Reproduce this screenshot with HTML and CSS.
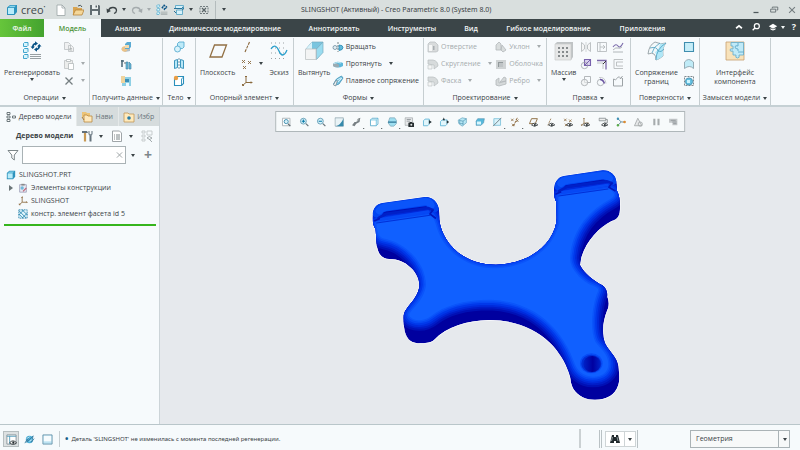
FILE: index.html
```html
<!DOCTYPE html>
<html lang="ru">
<head>
<meta charset="utf-8">
<title>SLINGSHOT - Creo Parametric 8.0</title>
<link rel="stylesheet" href="styles.css">
</head>
<body>
<svg class="sprite" aria-hidden="true">
  <symbol id="cube" viewBox="0 0 12 12"><path d="M1 3.500 4 1h7v7L8.500 11H1z" fill="#2e93bd"/><path d="M2 4h6v6H2z" fill="#b9ecfa"/><path d="M2.500 3.300 4.300 1.700h5.500L8.300 3.300z" fill="#8bd6ee"/></symbol>
  <symbol id="new" viewBox="0 0 12 12"><path d="M2 1h5l3 3v7.500H2z" fill="#fff" stroke="#9ba3a5" stroke-width=".8"/><path d="M7 1v3h3" fill="none" stroke="#9ba3a5" stroke-width=".8"/></symbol>
  <symbol id="open" viewBox="0 0 12 12"><path d="M1 3h4l1 1h4v7H1z" fill="#d9a552"/><path d="M1 11 3.500 6H12l-2 5z" fill="#f4d79a" stroke="#b07a2c" stroke-width=".7"/><path d="M6 2q3-2 4 1" fill="none" stroke="#4b585c"/></symbol>
  <symbol id="save" viewBox="0 0 12 12"><path d="M1 1h9l1 1v9H1z" fill="#626d71"/><path d="M3 1h6v4H3zM3 7h6v4H3z" fill="#e9eeee"/><path d="M6.500 1.500H8v2H6.500z" fill="#566165"/></symbol>
  <symbol id="undo" viewBox="0 0 12 12"><path d="M2.500 6.500C4 2 10.500 3 10.500 6.500q0 2-2.500 3" fill="none" stroke="currentColor" stroke-width="1.300"/><path d="M.5 4.500 1 9l4-2z" fill="currentColor"/></symbol>
  <symbol id="regen" viewBox="0 0 20 20"><g fill="#d8f4fc" stroke="#2f9cc8" stroke-width=".9"><path d="M1.500 2.500 2.500 1.500h3.500v3l-1 1h-3.500zM1.500 8.500l1-1h3.500v3l-1 1h-3.500zM1.500 14.500l1-1h3.500v3l-1 1h-3.500z"/></g><path d="M8 13.500h11M8 15.500h11M8 17.500h11" stroke="#8b9497" stroke-width=".9"/><path d="M10.700 6.500q0-3.500 3-4M17.300 4.500q0 3.500-3 4" stroke="#0b5486" stroke-width="1.700" fill="none"/><path d="M13 .2v4.600l3-2.300zM15 6.200v4.600l-3-2.300zM8.500 5.500h4.400L10.700 8zM15.100 5.500h4.400L17.300 3z" fill="#0b5486"/></symbol>
  <symbol id="windows" viewBox="0 0 12 12"><path d="M2.500 1.500h8v3h-8zM3.500 6h6v4.500h-6z" fill="#d5f1fa" stroke="#5ba7c6" stroke-width=".9"/><path d="M1 4.500h8M9 3l2 1.500L9 6M3 9 1 7" fill="none" stroke="#28749a"/></symbol>
  <symbol id="closewin" viewBox="0 0 12 12"><path d="M2 2.500h8v7H2z" fill="none" stroke="#737d80" stroke-dasharray="2 1"/><path d="m4 4 4 4m0-4L4 8" stroke="#596467" stroke-width="1.200"/></symbol>
  <symbol id="copy" viewBox="0 0 12 12"><path d="M1.500 1.500h4l2 2v5h-6zM5.500 4.500h3l2 2v4h-5z" fill="#eff0f1" stroke="#bbc0c2" stroke-width=".8"/><path d="M6.500 7.500H9M6.500 9H9" stroke="#abb1b3" stroke-width=".8"/></symbol>
  <symbol id="paste" viewBox="0 0 12 12"><path d="M1.500 2.500h8v8h-8z" fill="#ecedec" stroke="#bec2c3" stroke-width=".8"/><path d="M3.500 1.500h4v2h-4zM5.500 5.500h5v6h-5z" fill="#fff" stroke="#b4babb" stroke-width=".8"/></symbol>
  <symbol id="cross" viewBox="0 0 12 12"><path d="m2.500 2.500 7 7m0-7-7 7" stroke="#757e81" stroke-width="1.300"/></symbol>
  <symbol id="shapes" viewBox="0 0 12 12"><path d="M1 8 6 5l4 2v3l-5 1z" fill="#b4bec4"/><circle cx="4.500" cy="8" r="2.800" fill="#ecc389"/><path d="M5 3 7 1h4v5L9 8H5z" fill="#5aaad3"/><path d="M5 4h4v3H5z" fill="#f4dcae"/></symbol>
  <symbol id="copygeom" viewBox="0 0 12 12"><path d="M2 2v7M1 3h3" stroke="#4c6675" stroke-width="1.500"/><path d="M4 5h3" stroke="#888" stroke-width="1.200"/><path d="M6 4h2v7H6zM9 4l2 2v5H9z" fill="#67bbdc" stroke="#3d7d9d" stroke-width=".6"/></symbol>
  <symbol id="shrink" viewBox="0 0 12 12"><path d="M2 2h9v9H2z" fill="#8fd0e5"/><path d="M1 1h4v7H1z" fill="#efd49e"/><path d="M5 4h4v3H5z" fill="#3c8fb5"/><path d="M6 8h3v3H6z" fill="#eefaff"/></symbol>
  <symbol id="bodies" viewBox="0 0 12 12"><path d="M4.500 2.500 6 1h5v5L9.500 7.500h-5z" fill="#bdeaf8" stroke="#4aa5cb" stroke-width=".8"/><circle cx="4.500" cy="8" r="3" fill="#d8f3fb" stroke="#4aa5cb" stroke-width=".8"/></symbol>
  <symbol id="split" viewBox="0 0 12 12"><path d="m1.500 2.500 3-1v8l-3 1zM7.500 1.500l3 1v8l-3-1z" fill="#b9e7f7" stroke="#2b8bb6" stroke-width=".9"/><path d="M6 0v12" stroke="#467f99" stroke-width=".8" stroke-dasharray="2 1"/></symbol>
  <symbol id="newbody" viewBox="0 0 12 12"><path d="M1.500 3.500 3.500 1.500h7V8.500l-2 2h-7z" fill="#fff" stroke="#2a8fbb" stroke-width="1.100"/><path d="M8.500 4v6.500M8.500 4l2-2" stroke="#2a8fbb" stroke-width=".9"/><circle cx="3" cy="3" r="2.200" fill="#eb9f45"/></symbol>
  <symbol id="plane" viewBox="0 0 20 20"><path d="M6.500 4h12l-4.500 12H2z" fill="none" stroke="#927044" stroke-width="1.300"/></symbol>
  <symbol id="axis" viewBox="0 0 12 12"><path d="m4 11 4.500-10" stroke="#896537" stroke-width="1.100" stroke-dasharray="3 1"/></symbol>
  <symbol id="points" viewBox="0 0 12 12"><path d="m1 2 3 3m0-3L1 5m6-2 3 3m0-3L7 6M2 8l3 3m0-3-3 3" stroke="#8a693c" stroke-width=".9"/></symbol>
  <symbol id="csys" viewBox="0 0 12 12"><path d="M5 1v6.500h6M5 7.500 1.500 10.500M4 2l1-1 1 1m4 4.500 1 1-1 1M1.500 9v1.500H3" fill="none" stroke="#8a693c"/></symbol>
  <symbol id="sketch" viewBox="0 0 20 20"><path d="M2 2h16M2 7h16M2 12h16M2 17.500h16" stroke="#9ba2a4" stroke-width="1" stroke-dasharray="1 3"/><path d="M2 8c3-5 6-3 8 2s5 6 8-1" fill="none" stroke="#289ecb" stroke-width="1.300"/></symbol>
  <symbol id="extrude" viewBox="0 0 20 20"><path d="m2 8 6-7h11L12.500 8z" fill="#79c5df" stroke="#77a9bd" stroke-width=".7"/><path d="m8 1v7H2z" fill="#d8f2fa"/><path d="m12.500 8 6.500-7v10.500l-6.500 7z" fill="#9adcf0" stroke="#77a9bd" stroke-width=".7"/><path d="M1.500 8h10.500v10.500H1.500z" fill="#f3f4f4" stroke="#bfc4c5" stroke-width=".8"/></symbol>
  <symbol id="revolve" viewBox="0 0 12 12"><path d="M6 1v10" stroke="#5c676b" stroke-width=".8" stroke-dasharray="2 1"/><circle cx="3" cy="6.500" r="2" fill="#e3edf1" stroke="#6d8d9f" stroke-width=".8"/><path d="M7 4q4 0 4 2.500t-4 3z" fill="#60bbdc" stroke="#2888b1" stroke-width=".8"/></symbol>
  <symbol id="sweep" viewBox="0 0 12 12"><path d="M1 6q3-4 10-1v3q-5 3-10 0z" fill="#5eb8db"/><path d="M1 6q4-2 6 1v2q-4 1-6-1z" fill="#9aabb3"/><path d="M2 5.500q4-2 7-.5" fill="none" stroke="#d8f4fb" stroke-width=".8"/></symbol>
  <symbol id="blend" viewBox="0 0 12 12"><path d="m1.500 9 3-5 5-3 1.500 2-4 6-4 1.500z" fill="#7bc7e5" stroke="#3c8fb4" stroke-width=".8"/><path d="m1.500 10 2-4 2-.5L3.500 11z" fill="#f7fafb" stroke="#71838c" stroke-width=".7"/><path d="m5 5 4-2M6 7l4-4" stroke="#e5f8fd" stroke-width=".8"/></symbol>
  <symbol id="solid" viewBox="0 0 12 12"><path d="M1 3 3 1h5l3 3v6l-2 1H1z" fill="#d8dbdc" stroke="#b7bcbe" stroke-width=".7"/><path d="M2 4h3v6H2z" fill="#f6f7f7"/><path d="M6 5h1.500v4H6z" fill="#a8aeb1"/></symbol>
  <symbol id="round" viewBox="0 0 12 12"><path d="M1 2h5q5 1 5 6l-4 3V7L1 6z" fill="#d7dbdc" stroke="#b7bdbf" stroke-width=".7"/><path d="M1 7h4v4H1z" fill="#f5f6f6" stroke="#b9bfc0" stroke-width=".6"/></symbol>
  <symbol id="shell" viewBox="0 0 12 12"><path d="M1 2h10v9H1z" fill="#cfd3d4"/><path d="M3 4h5v5H3z" fill="#92999b"/><path d="M4 5h4v4H4z" fill="#bfc4c6"/></symbol>
  <symbol id="draft" viewBox="0 0 12 12"><path d="M1 9V4l3-3 2 2v6zM6 9l1-5 4 5-3 2z" fill="#d9dddd" stroke="#b2b8ba" stroke-width=".8"/></symbol>
  <symbol id="rib" viewBox="0 0 12 12"><path d="M1 10V5l3-2v5L11 6v3l-7 2zM5 7l4-5 2 1v3z" fill="#d5d9da" stroke="#b2b8ba" stroke-width=".8"/></symbol>
  <symbol id="pattern" viewBox="0 0 20 20"><path d="m1 3 2-2h16v15l-2 3H1z" fill="#bfc3c5"/><path d="M1 3h16v16H1z" fill="#e6e7e7" stroke="#c8cbcc" stroke-width=".7"/><path d="M4 6h2v2H4zm4 0h2v2H8zm4 0h2v2h-2zM4 10h2v2H4zm4 0h2v2H8zm4 0h2v2h-2zM4 14h2v2H4zm4 0h2v2H8zm4 0h2v2h-2z" fill="#858a8c"/></symbol>
  <symbol id="mirror" viewBox="0 0 12 12"><path d="m1.500 1.500 3 2.500v4l-3 2.500zM10.500 1.500l-3 2.500v4l3 2.500z" fill="#f5f6f6" stroke="#b0b5b7" stroke-width=".8"/><path d="M6 1v10" stroke="#c9cdce" stroke-width=".8"/></symbol>
  <symbol id="extend" viewBox="0 0 12 12"><path d="M1.500 1.500h9v9h-9zM4 1.500v9M4 6h5M7 4l2 2-2 2" fill="none" stroke="#b0b5b8" stroke-width=".8"/></symbol>
  <symbol id="offset" viewBox="0 0 12 12"><path d="M1 6q3-4 5-1t5-3" fill="none" stroke="#7b6bab" stroke-width="1.100"/><path d="M1 9q3-3 5-2t4-1M1 11h10" fill="none" stroke="#a0a5a8" stroke-width=".8"/></symbol>
  <symbol id="merge" viewBox="0 0 12 12"><path d="M4.500 1.500h6v6h-6z" fill="#d9d1ed" stroke="#7862ad" stroke-width="1.100"/><circle cx="4.500" cy="7.500" r="3.200" fill="none" stroke="#a0a5a8" stroke-width=".8"/><path d="m5 7 5-5" stroke="#7862ad"/></symbol>
  <symbol id="trim" viewBox="0 0 12 12"><path d="M1 2.500h9v9" fill="none" stroke="#7c68a9" stroke-width="1.300"/><path d="M1 5h6v6" fill="none" stroke="#b3b7b9" stroke-width=".8"/><path d="m7 6 3-3" stroke="#333"/></symbol>
  <symbol id="thicken" viewBox="0 0 12 12"><path d="M11 1.500H2v9h9M11 4H4.500v4H11" fill="none" stroke="#b7bbbd" stroke-width=".9"/></symbol>
  <symbol id="intersect" viewBox="0 0 12 12"><path d="M4.500 1.500h6v6h-6z" fill="none" stroke="#abb0b3" stroke-width=".9"/><circle cx="4.500" cy="7.500" r="3.200" fill="#f0f1f1" fill-opacity=".6" stroke="#abb0b3" stroke-width=".9"/></symbol>
  <symbol id="project" viewBox="0 0 12 12"><circle cx="4.500" cy="7.500" r="3.200" fill="none" stroke="#abb0b3" stroke-width=".9"/><path d="M3 2.500q6-1 7 6" fill="none" stroke="#c6c9cb"/><path d="M4 4.500q3 0 4.500 4" fill="none" stroke="#6952a2" stroke-width="1.400"/></symbol>
  <symbol id="solidify" viewBox="0 0 12 12"><path d="M1.500 4v7h9V3M1.500 4q2 2 4-1t3 1l2-3" fill="none" stroke="#9da3a6"/></symbol>
  <symbol id="surface" viewBox="0 0 20 20"><path d="M1 13Q2 4 8 1q6 3 11 1-4 4-3 13-5 4-7 4 0-9-8-6z" fill="#f2f8fa" stroke="#8a959a" stroke-width=".8"/><path d="M13 2.500q4 .5 6-.5-4 4-3 13-5 4-7 4 1-5-1-8 4-1 5-8.500z" fill="#b0e7f7"/><path d="M3 7q7-2 8 3 3 2 6-2M5 12Q6 6 13 2M9 19Q9 8 19 2" fill="none" stroke="#4a9ebf" stroke-width=".8"/></symbol>
  <symbol id="fill" viewBox="0 0 12 12"><path d="M1.500 1.500h9v9h-9z" fill="#c5edf8" stroke="#3f8dae" stroke-width="1.100"/></symbol>
  <symbol id="style" viewBox="0 0 12 12"><path d="M1.500 10.500V4q4-5 9 0v6.500q-4-4-9 0z" fill="#c0ebf7" stroke="#849ba4" stroke-width=".8"/></symbol>
  <symbol id="freestyle" viewBox="0 0 12 12"><path d="M1.500 1.500h9v9h-9z" fill="none" stroke="#6f7c81" stroke-width=".9" stroke-dasharray="2 1"/><circle cx="6" cy="6.500" r="3.600" fill="#65c0e0" stroke="#3d8aab" stroke-width=".8"/><path d="M4 5h3v3H4z" fill="#ccf4fe"/></symbol>
  <symbol id="puzzle" viewBox="0 0 20 20"><path d="M1 1h18v18H1z" fill="#f8e2ba" stroke="#c6a06e" stroke-width=".8"/><path d="M6 1.500h12.500V14H14q1 3-1.500 3T11 14H8v-4q-3 1-3-1t3-1V5H6z" fill="#c0eaf8" stroke="#5fa9ca" stroke-width=".8"/><path d="M13 2v3q-3-1-3 1t3 2v2m0 1h6" fill="none" stroke="#5fa9ca" stroke-width=".9"/></symbol>
  <symbol id="tree" viewBox="0 0 12 12"><path d="M2 1.500h3v2H2zM2 5h3v2H2zM2 8.500h3v2H2zM7.500 5h3v2h-3z" fill="#fff" stroke="#5f6b6f" stroke-width=".9"/></symbol>
  <symbol id="folders" viewBox="0 0 12 12"><path d="M1 1h4l1 1h3v4H1z" fill="#ecc478"/><path d="M3 4h3l1 1h4v6H3z" fill="#ffe9bd" stroke="#b98940" stroke-width=".8"/><path d="m1 6 2 3" stroke="#b17b2e"/></symbol>
  <symbol id="favorite" viewBox="0 0 12 12"><path d="M1 2h4l1 1h5v8H1z" fill="#ffeabc" stroke="#c09758" stroke-width=".8"/><circle cx="6" cy="7" r="1.800" fill="#277ca6"/></symbol>
  <symbol id="tools" viewBox="0 0 12 12"><path d="M4 3v8.500" stroke="#c99a55" stroke-width="2.200"/><path d="M1 3V1h5l1 2z" fill="#62707a"/><path d="M9.500 5v6.500" stroke="#65737c" stroke-width="2"/><path d="M8 1v3l1.500 1.500L11 4V1" fill="none" stroke="#7a8790" stroke-width="1.200"/></symbol>
  <symbol id="sheet" viewBox="0 0 12 12"><path d="M1.500 1h7l2 2v8.500h-9z" fill="#fff" stroke="#949b9e" stroke-width=".9"/><path d="M3 5h1m1 0h4M3 7h1m1 0h4M3 9h1m1 0h4" stroke="#6e787c" stroke-width=".9"/></symbol>
  <symbol id="treefind" viewBox="0 0 12 12"><path d="M1 1h3v2H1zm0 4h3v2H1zm0 4h3v2H1zM6 1h5v4H6z" fill="none" stroke="#c3c8ca" stroke-width=".9"/><path d="M6 8q2-3 5 0-2 3-5 0zM8 9l3 3" fill="none" stroke="#9aa1a4" stroke-width=".9"/></symbol>
  <symbol id="funnel" viewBox="0 0 12 12"><path d="M1 1.500h10L7.300 6v5L4.800 9V6z" fill="#fff" stroke="#6d787c" stroke-width=".9"/></symbol>
  <symbol id="design" viewBox="0 0 12 12"><path d="M2 2h8v9H2z" fill="#e8eaf3" stroke="#9c9fb8"/><path d="M4 1h4v2H4z" fill="#888"/><circle cx="5" cy="6" r="2" fill="#72b8da"/><path d="m6 10 4-4" stroke="#bd6275" stroke-width="1.300"/></symbol>
  <symbol id="facet" viewBox="0 0 12 12"><path d="M1 1h10v10H1z" fill="#dff4fb" stroke="#2781a8" stroke-dasharray="2 1"/><path d="m1 2 9 9M5 1l6 6M1 6l5 5M7 1 1 7m10-2-6 6" stroke="#2786b0"/></symbol>
  <symbol id="zoomfit" viewBox="0 0 12 12"><path d="M1.500 1.500h9v9h-9z" fill="#fff" stroke="#a3abae"/><circle cx="6" cy="5.500" r="2.500" fill="#d4eff8" stroke="#2e82a6"/><path d="m8 8 3 3" stroke="#57656b" stroke-width="1.400"/></symbol>
  <symbol id="zoomin" viewBox="0 0 12 12"><circle cx="5" cy="5" r="3.500" fill="#d8f2fa" stroke="#5c98b0"/><path d="M3 5h4M5 3v4" stroke="#087aa9" stroke-width="1.300"/><path d="m8 8 3 3" stroke="#66747a" stroke-width="1.500"/></symbol>
  <symbol id="zoomout" viewBox="0 0 12 12"><circle cx="5" cy="5" r="3.500" fill="#d8f2fa" stroke="#5c98b0"/><path d="M3 5h4" stroke="#087aa9" stroke-width="1.300"/><path d="m8 8 3 3" stroke="#66747a" stroke-width="1.500"/></symbol>
  <symbol id="repaint" viewBox="0 0 12 12"><path d="M1 1h10v10H1z" fill="#e9f3f6" stroke="#839ba5" stroke-width=".8"/><path d="M2 11q6-2 9-9v9z" fill="#358aac"/></symbol>
  <symbol id="brush" viewBox="0 0 12 12"><path d="m1 10 3-4h2l2-4 3-1-1 5-4 2-2 3z" fill="#777f83"/><path d="m6 6 3-3" stroke="#d3d8d9"/></symbol>
  <symbol id="box" viewBox="0 0 12 12"><path d="m1.500 3.500 2-2h7v7l-2 2h-7z" fill="#fff" stroke="#56a7c9"/><path d="M1.500 3.500h7v7m0-7 2-2" fill="none" stroke="#61bfdf"/></symbol>
  <symbol id="section" viewBox="0 0 12 12"><path d="M3 1h6l2 3v4l-3 3H4L1 7z" fill="#9edff1" stroke="#7ba3b4" stroke-width=".8"/><path d="M1 6h10" stroke="#2c7595" stroke-width="1.500"/></symbol>
  <symbol id="camera" viewBox="0 0 12 12"><path d="M1 1h9v9H1z" fill="#e6e8e9" stroke="#9ba2a5" stroke-width=".8"/><path d="M3 3h5M3 5h4" stroke="#8b9396"/><path d="M5 7h1l1-1h2l1 1h2v5H5z" fill="#272e30"/><circle cx="8.500" cy="9.300" r="1.200" fill="#dfe3e4"/></symbol>
  <symbol id="boxright" viewBox="0 0 12 12"><path d="m1.500 4.500 2-2h5v6l-2 2h-5z" fill="#e1f6fc" stroke="#5cb3d5"/><path d="M8 3.500v5L11.500 6z" fill="#263337"/></symbol>
  <symbol id="boxtop" viewBox="0 0 12 12"><path d="m1.500 5.500 2-2h6v5l-2 2h-6z" fill="#e1f6fc" stroke="#5cb3d5"/><path d="M4 4 5.500.5 7 4zM9 4v4l3-2z" fill="#263337"/></symbol>
  <symbol id="persp" viewBox="0 0 12 12"><path d="m1 4 5-3 5 1v5l-5 4-4-3z" fill="#b8e8f5" stroke="#62a2bb" stroke-width=".8"/><path d="m2 4 5 1 4-3M7 5v5M3 5v3h4" fill="none" stroke="#4890ad" stroke-width=".8"/></symbol>
  <symbol id="flat" viewBox="0 0 12 12"><path d="m1 5 2-3h8l-1 5-3 3H1z" fill="#55b8db" stroke="#4b8eac" stroke-width=".7"/><path d="M2 5.500h5V9H2z" fill="#d9f6fd"/></symbol>
  <symbol id="clip" viewBox="0 0 12 12"><path d="M2 2h8v8H2z" fill="#d9f3fb" stroke="#7cc2da"/><path d="M1 11 11 1" stroke="#78868c" stroke-width="1.200"/></symbol>
  <symbol id="eye" viewBox="0 0 12 12"><path d="M4 9.500q3.500-4 7.500 0-4 3.500-7.500 0z" fill="#fff" stroke="#303638"/><circle cx="8" cy="9.500" r="1.200" fill="#20282b"/></symbol>
  <symbol id="planeview" viewBox="0 0 12 12"><path d="M4 2h7L8.500 8H1.500z" fill="none" stroke="#8a693c" stroke-width="1.100"/></symbol>
  <symbol id="note" viewBox="0 0 12 12"><path d="M1 1.500h8v3H1zM9 3h2v4H7" fill="#eee" stroke="#888f92"/></symbol>
  <symbol id="spin" viewBox="0 0 12 12"><path d="m2 2 4 4-4 4m4-4h5" fill="none" stroke="#507e92"/><circle cx="2" cy="2" r="1.500" fill="#3f91b6"/><circle cx="2" cy="10" r="1.500" fill="#5aab4b"/><circle cx="10" cy="6" r="1.600" fill="#df8b2f"/></symbol>
  <symbol id="warning" viewBox="0 0 12 12"><path d="m5.500 1.500 5 9h-9z" fill="#e6e8e9" stroke="#a3a8aa"/><circle cx="8.500" cy="8.500" r="2.500" fill="none" stroke="#a3a8aa"/></symbol>
  <symbol id="pause" viewBox="0 0 12 12"><path d="M2.500 2H5v8H2.500zM7.500 2H10v8H7.500z" fill="#a6abad"/></symbol>
  <symbol id="resume" viewBox="0 0 12 12"><path d="M1 2h10v8H5V7H1z" fill="#c4c8ca"/><path d="M3 4h6M5 6h5M6 8h4" stroke="#8e9497"/></symbol>
  <symbol id="panel" viewBox="0 0 12 12"><path d="M1 1h10v10H1z" fill="#fff" stroke="#88949a"/><path d="M1 2.500h10M4 2v9" stroke="#569fbd"/><use href="#eye" width="12" height="12"/></symbol>
  <symbol id="browser" viewBox="0 0 12 12"><circle cx="6" cy="6" r="4" fill="#4fb0d8"/><path d="M1 10 5 3l-2 6 7-7-2 7 3-4" fill="none" stroke="#3a7fa3"/><path d="m3 5 3-2m0 5 3-2" stroke="#caf1fd"/></symbol>
  <symbol id="fullscreen" viewBox="0 0 12 12"><path d="M1 1h10v10H1z" fill="#bde3f2" stroke="#6b96ac"/><path d="M2 2h8v6H2z" fill="#f7fcfe"/></symbol>
  <symbol id="binoculars" viewBox="0 0 12 12"><path d="M3 2h2v2h2V2h2l2 8H7V8H5v2H1z" fill="#20292c"/><path d="m3.500 4-1 4m5.500-4 1 4" stroke="#a2adb1" stroke-width=".8"/></symbol>
  <symbol id="hat" viewBox="0 0 12 12"><path d="m1 5 5-3 5 3-5 3z" fill="#fff"/><path d="M3 8q3 3 6 0" fill="none" stroke="#fff" stroke-width="1.500"/></symbol>
  <symbol id="loupe" viewBox="0 0 12 12"><circle cx="7" cy="5" r="3" fill="none" stroke="#fff" stroke-width="1.500"/><path d="m5 7-3 3" stroke="#fff" stroke-width="1.600"/></symbol>
  <symbol id="up" viewBox="0 0 12 12"><path d="m2.500 7.500 3.500-3 3.500 3" fill="none" stroke="#fff" stroke-width="2"/></symbol>
  <symbol id="min" viewBox="0 0 12 12"><path d="M3 9h6" stroke="#4e585b" stroke-width="1.500"/></symbol>
  <symbol id="restore" viewBox="0 0 12 12"><path d="M4 4V2.500h6.500V6H9M2 5h6v3.500H2z" fill="none" stroke="#5e686b"/></symbol>
</svg>

<div class="app">
  <header class="titlebar">
    <div class="brand"><svg class="i"><use href="#cube"/></svg><span>creo<sup>•</sup></span></div>
    <div class="quick">
      <button aria-label="Создать"><svg class="i"><use href="#new"/></svg></button>
      <button aria-label="Открыть"><svg class="i"><use href="#open"/></svg></button>
      <button aria-label="Сохранить"><svg class="i"><use href="#save"/></svg></button>
      <button aria-label="Отменить"><svg class="i"><use href="#undo"/></svg><i class="caret"></i></button>
      <button class="redo" aria-label="Повторить"><svg class="i flip"><use href="#undo"/></svg><i class="caret"></i></button>
      <button aria-label="Регенерация"><svg class="i"><use href="#regen"/></svg></button>
      <button aria-label="Окна"><svg class="i"><use href="#windows"/></svg><i class="caret"></i></button>
      <button aria-label="Закрыть окно"><svg class="i"><use href="#closewin"/></svg></button>
      <button class="more" aria-label="Настроить панель"><i class="caret"></i></button>
    </div>
    <h1>SLINGSHOT (Активный) - Creo Parametric 8.0 (System 8.0)</h1>
    <div class="winctl">
      <button aria-label="Свернуть"><svg class="s"><use href="#min"/></svg></button>
      <button aria-label="Развернуть"><svg class="s"><use href="#restore"/></svg></button>
      <button aria-label="Закрыть"><svg class="s"><use href="#cross"/></svg></button>
    </div>
  </header>

  <nav class="menubar">
    <a class="file" href="#">Файл</a>
    <a class="current" href="#">Модель</a>
    <a class="t1" href="#">Анализ</a>
    <a class="t2" href="#">Динамическое моделирование</a>
    <a class="t3" href="#">Аннотировать</a>
    <a class="t4" href="#">Инструменты</a>
    <a class="t5" href="#">Вид</a>
    <a class="t6" href="#">Гибкое моделирование</a>
    <a class="t7" href="#">Приложения</a>
    <div class="help">
      <button aria-label="Скрыть ленту"><svg class="s"><use href="#up"/></svg></button>
      <button aria-label="Поиск"><svg class="s"><use href="#loupe"/></svg></button>
      <button aria-label="Обучение"><svg class="s"><use href="#hat"/></svg><i class="caret"></i></button>
      <button aria-label="Справка">?</button>
    </div>
  </nav>

  <section class="ribbon">
    <div class="group g1">
      <div class="tools">
        <button class="big"><svg><use href="#regen"/></svg><span>Регенерировать</span><i class="caret"></i></button>
        <div class="stack">
          <button aria-label="Копировать"><svg class="i"><use href="#copy"/></svg></button>
          <button class="off" aria-label="Вставить"><svg class="i"><use href="#paste"/></svg><i class="caret"></i></button>
          <button class="off" aria-label="Удалить"><svg class="i"><use href="#cross"/></svg><i class="caret"></i></button>
        </div>
      </div>
      <button class="label">Операции<i class="caret"></i></button>
    </div>
    <div class="group g2">
      <div class="tools mid">
        <div class="stack">
          <button aria-label="Пользовательский элемент"><svg class="i"><use href="#shapes"/></svg></button>
          <button aria-label="Копировать геометрию"><svg class="i"><use href="#copygeom"/></svg></button>
          <button aria-label="Упрощение"><svg class="i"><use href="#shrink"/></svg></button>
        </div>
      </div>
      <button class="label">Получить данные<i class="caret"></i></button>
    </div>
    <div class="group g3">
      <div class="tools mid">
        <div class="stack">
          <button aria-label="Булевы операции"><svg class="i"><use href="#bodies"/></svg></button>
          <button aria-label="Разделить тело"><svg class="i"><use href="#split"/></svg></button>
          <button aria-label="Новое тело"><svg class="i"><use href="#newbody"/></svg></button>
        </div>
      </div>
      <button class="label">Тело<i class="caret"></i></button>
    </div>
    <div class="group g4">
      <div class="tools">
        <button class="big"><svg><use href="#plane"/></svg><span>Плоскость</span></button>
        <div class="stack">
          <button aria-label="Ось"><svg class="i"><use href="#axis"/></svg></button>
          <button aria-label="Точка"><svg class="i"><use href="#points"/></svg><i class="caret"></i></button>
          <button aria-label="Система координат"><svg class="i"><use href="#csys"/></svg></button>
        </div>
        <button class="big"><svg><use href="#sketch"/></svg><span>Эскиз</span></button>
      </div>
      <button class="label">Опорный элемент<i class="caret"></i></button>
    </div>
    <div class="group g5">
      <div class="tools">
        <button class="big"><svg><use href="#extrude"/></svg><span>Вытянуть</span></button>
        <div class="stack">
          <button><svg class="i"><use href="#revolve"/></svg>Вращать</button>
          <button><svg class="i"><use href="#sweep"/></svg>Протянуть<i class="caret far"></i></button>
          <button><svg class="i"><use href="#blend"/></svg>Плавное сопряжение</button>
        </div>
      </div>
      <button class="label">Формы<i class="caret"></i></button>
    </div>
    <div class="group g6">
      <div class="tools">
        <div class="stack off">
          <button><svg class="i"><use href="#solid"/></svg>Отверстие</button>
          <button><svg class="i"><use href="#round"/></svg>Скругление<i class="caret far"></i></button>
          <button><svg class="i"><use href="#round"/></svg>Фаска<i class="caret far"></i></button>
        </div>
        <div class="stack off">
          <button><svg class="i"><use href="#draft"/></svg>Уклон<i class="caret far"></i></button>
          <button><svg class="i"><use href="#shell"/></svg>Оболочка</button>
          <button><svg class="i"><use href="#rib"/></svg>Ребро<i class="caret far"></i></button>
        </div>
      </div>
      <button class="label">Проектирование<i class="caret"></i></button>
    </div>
    <div class="group g7">
      <div class="tools">
        <button class="big"><svg><use href="#pattern"/></svg><span>Массив</span><i class="caret"></i></button>
        <div class="matrix">
          <button aria-label="Зеркало"><svg class="i"><use href="#mirror"/></svg></button>
          <button aria-label="Удлинить"><svg class="i"><use href="#extend"/></svg></button>
          <button aria-label="Сместить"><svg class="i"><use href="#offset"/></svg></button>
          <button aria-label="Объединить"><svg class="i"><use href="#merge"/></svg></button>
          <button aria-label="Обрезать"><svg class="i"><use href="#trim"/></svg></button>
          <button aria-label="Утолстить"><svg class="i"><use href="#thicken"/></svg></button>
          <button aria-label="Пересечь"><svg class="i"><use href="#intersect"/></svg></button>
          <button aria-label="Проецировать"><svg class="i"><use href="#project"/></svg></button>
          <button aria-label="Создать тело"><svg class="i"><use href="#solidify"/></svg></button>
        </div>
      </div>
      <button class="label">Правка<i class="caret"></i></button>
    </div>
    <div class="group g8">
      <div class="tools">
        <button class="big"><svg><use href="#surface"/></svg><span>Сопряжение<br>границ</span></button>
        <div class="stack">
          <button aria-label="Заполнить"><svg class="i"><use href="#fill"/></svg></button>
          <button aria-label="Стиль"><svg class="i"><use href="#style"/></svg></button>
          <button aria-label="Свободный стиль"><svg class="i"><use href="#freestyle"/></svg></button>
        </div>
      </div>
      <button class="label">Поверхности<i class="caret"></i></button>
    </div>
    <div class="group g9">
      <div class="tools mid">
        <button class="big"><svg><use href="#puzzle"/></svg><span>Интерфейс<br>компонента</span></button>
      </div>
      <button class="label">Замысел модели<i class="caret"></i></button>
    </div>
  </section>

  <main class="work">
    <aside class="side">
      <div class="tabs">
        <button class="on"><svg class="i"><use href="#tree"/></svg>Дерево модели</button>
        <button><svg class="i"><use href="#folders"/></svg><span class="fade">Нави</span></button>
        <button><svg class="i"><use href="#favorite"/></svg><span class="fade">Избр</span></button>
      </div>
      <div class="treehead">
        <h2>Дерево модели</h2>
        <button aria-label="Настройки"><svg class="i"><use href="#tools"/></svg><i class="caret"></i></button>
        <button aria-label="Показать"><svg class="i"><use href="#sheet"/></svg><i class="caret"></i></button>
        <button aria-label="Найти в дереве"><svg class="i"><use href="#treefind"/></svg></button>
      </div>
      <div class="filter">
        <svg class="i"><use href="#funnel"/></svg>
        <div class="field"><input type="text" aria-label="Фильтр дерева"><button aria-label="Очистить"><svg class="s"><use href="#cross"/></svg></button></div>
        <button aria-label="Параметры фильтра"><i class="caret"></i></button>
        <button class="plus" aria-label="Добавить">+</button>
      </div>
      <ul class="nodes">
        <li><svg class="s"><use href="#cube"/></svg>SLINGSHOT.PRT</li>
        <li class="child"><i class="arrow"></i><svg class="s"><use href="#design"/></svg>Элементы конструкции</li>
        <li class="child"><i class="gap"></i><svg class="s"><use href="#csys"/></svg>SLINGSHOT</li>
        <li class="child"><i class="gap"></i><svg class="s"><use href="#facet"/></svg>констр. элемент фасета id 5</li>
      </ul>
      <div class="insert"></div>
    </aside>

    <section class="canvas">
      <svg class="model" viewBox="160 107 640 317" role="img" aria-label="Модель рогатки">
        <defs>
          <path id="outline" d="M38 165C38 145 50 131 68 129L195 111C215 109 235 125 237 150L238 180C245 240 300 314 408 314C520 312 588 240 590 175L589 126C582 115 581 95 583 82C585 62 598 50 612 48L728 31C750 30 768 45 769 65L771 92C780 108 782 135 779 158C776 172 770 178 755 183C710 205 665 260 660 315C672 340 700 362 727 376C740 385 743 400 742 410C748 425 747 440 742 450C728 485 725 520 735 550C745 572 765 585 773 610C778 630 780 660 775 675C765 705 740 720 703 719C670 719 645 700 637 680C630 665 633 650 626 635C605 570 530 480 388 480C320 482 260 500 222 540C210 552 165 553 152 543C135 530 130 505 131 470C132 440 170 425 178 380C182 340 140 297 88 297C65 297 50 280 49 240L47 207C38 195 38 180 38 165Z"/>
          <path id="face" d="M50 188L214 166C226 180 228 200 236 218C265 285 330 326 408 325C500 322 580 270 598 190L598 108L748 88C764 96 768 108 752 116C690 150 636 205 630 295C632 330 660 355 686 372C712 382 718 386 713 396C695 440 690 510 706 545C722 568 744 580 745 610C746 634 730 650 698 650C670 650 652 632 644 610C604 500 520 424 390 419C310 419 250 438 210 470C193 483 162 485 150 470C138 455 192 430 198 375C198 306 132 246 74 236C58 232 50 222 50 188Z"/>
          <clipPath id="body"><use href="#outline"/></clipPath>
          <linearGradient id="hole"><stop offset="0" stop-color="#0022c8"/><stop offset=".55" stop-color="#0000a0"/><stop offset="1" stop-color="#0022c8"/></linearGradient>
        </defs>
        <g transform="translate(360 160) scale(.3333)">
          <use href="#outline" fill="#00009f" stroke="#f6f7fa" stroke-width="4"/>
          <g clip-path="url(#body)" stroke-linejoin="round">
            <use href="#outline" fill="#00009f"/>
            <use href="#face" fill="none" stroke="#0010b5" stroke-width="64"/>
            <use href="#face" fill="none" stroke="#001cc8" stroke-width="52"/>
            <use href="#face" fill="none" stroke="#002adb" stroke-width="41"/>
            <use href="#face" fill="none" stroke="#0038ea" stroke-width="30"/>
            <use href="#face" fill="none" stroke="#0648f4" stroke-width="19"/>
            <use href="#face" fill="none" stroke="#0b55fa" stroke-width="9"/>
            <use href="#face" fill="#1060ff"/>
            <g fill="none" stroke-linecap="round">
              <path d="M52 156Q56 140 75 138L194 122Q214 120 222 140M597 75Q601 60 620 58L728 42Q748 41 756 58" stroke="#0044f0" stroke-width="34"/>
              <path d="M58 152Q65 143 80 141L194 125Q208 124 213 136M603 70Q611 61 625 60L728 46Q742 45 748 55" stroke="#0b55fa" stroke-width="22"/>
              <path d="M56 174L78 162L204 144L218 150M598 93L622 80L740 64L756 70" stroke="#0020c8" stroke-width="8"/>
              <path d="M62 178L204 155M606 97L742 75" stroke="#0648f4" stroke-width="8"/>
              <path d="M44 182L58 176M217 152L210 162L226 174M588 102L602 96M755 70L747 82L765 92" stroke="#0018bd" stroke-width="5"/>
              <path d="M50 189L209 166M596 108L744 87" stroke="#0030d8" stroke-width="3"/>
            </g>
          </g>
          <ellipse cx="694" cy="610" rx="34" ry="30" fill="#084cf5"/>
          <ellipse cx="694" cy="611" rx="30" ry="27" fill="#0030d8"/>
          <ellipse cx="696" cy="612" rx="26" ry="24" fill="url(#hole)"/>
        </g>
      </svg>
      <div class="viewbar" role="toolbar" aria-label="Вид">
        <button aria-label="Вписать"><svg class="s"><use href="#zoomfit"/></svg></button>
        <button aria-label="Увеличить"><svg class="s"><use href="#zoomin"/></svg></button>
        <button aria-label="Уменьшить"><svg class="s"><use href="#zoomout"/></svg></button>
        <button aria-label="Перерисовать"><svg class="s"><use href="#repaint"/></svg></button>
        <button class="dot" aria-label="Рендеринг"><svg class="s"><use href="#brush"/></svg></button>
        <button class="dot" aria-label="Стиль отображения"><svg class="s"><use href="#box"/></svg></button>
        <button class="dot" aria-label="Сечения"><svg class="s"><use href="#section"/></svg></button>
        <button aria-label="Снимок"><svg class="s"><use href="#camera"/></svg></button>
        <button aria-label="Вид справа"><svg class="s"><use href="#boxright"/></svg></button>
        <button aria-label="Вид сверху"><svg class="s"><use href="#boxtop"/></svg></button>
        <button aria-label="Перспектива"><svg class="s"><use href="#persp"/></svg></button>
        <button aria-label="Плоский вид"><svg class="s"><use href="#flat"/></svg></button>
        <button class="dot" aria-label="Отсечение"><svg class="s"><use href="#clip"/></svg></button>
        <button class="dot" aria-label="Фильтры опорных элементов"><svg class="s"><use href="#points"/><use href="#axis"/></svg></button>
        <button aria-label="Показ плоскостей"><svg class="s"><use href="#planeview"/><use href="#eye"/></svg></button>
        <button aria-label="Показ осей"><svg class="s"><use href="#axis" width="8"/><use href="#eye"/></svg></button>
        <button aria-label="Показ точек"><svg class="s"><use href="#points"/><use href="#eye"/></svg></button>
        <button aria-label="Показ систем координат"><svg class="s"><use href="#csys" width="9"/><use href="#eye"/></svg></button>
        <button aria-label="Показ аннотаций"><svg class="s"><use href="#note"/><use href="#eye"/></svg></button>
        <button aria-label="Центр вращения"><svg class="s"><use href="#spin"/></svg></button>
        <button aria-label="Моделирование"><svg class="s"><use href="#warning"/></svg></button>
        <button aria-label="Пауза"><svg class="s"><use href="#pause"/></svg></button>
        <button aria-label="Продолжить"><svg class="s"><use href="#resume"/></svg></button>
      </div>
    </section>
  </main>

  <footer class="status">
    <div class="panes">
      <button class="pressed" aria-label="Дерево"><svg class="s"><use href="#panel"/></svg></button>
      <button aria-label="Браузер"><svg class="s"><use href="#browser"/></svg></button>
      <button aria-label="Полный экран"><svg class="s"><use href="#fullscreen"/></svg></button>
    </div>
    <p><b>•</b> Деталь 'SLINGSHOT' не изменилась с момента последней регенерации.</p>
    <div class="search">
      <button aria-label="Найти"><svg class="i"><use href="#binoculars"/></svg></button>
      <button aria-label="Параметры поиска"><i class="caret"></i></button>
    </div>
    <div class="pick">
      <select aria-label="Фильтр выбора"><option>Геометрия</option></select>
      <span class="drop"><i class="caret"></i></span>
    </div>
  </footer>
</div>
</body>
</html>
```

FILE: styles.css
```css
* { box-sizing: border-box; }
body { margin: 0; font: 7px/8px "Open Sans", "Noto Sans", sans-serif; color: #3b4346; }
button, input, select { font: inherit; color: inherit; margin: 0; padding: 0; border: 0; background: none; }
button { display: flex; align-items: center; justify-content: center; white-space: nowrap; }
a { color: inherit; text-decoration: none; }
h1, h2, p, ul { margin: 0; padding: 0; font-size: inherit; font-weight: inherit; list-style: none; }
svg { display: block; flex: none; }
.sprite { position: absolute; width: 0; height: 0; }
.i { width: 12px; height: 12px; }
.s { width: 10px; height: 10px; }
.flip { transform: scaleX(-1); }
.caret { flex: none; width: 0; height: 0; border: 2px solid transparent; border-top: 3px solid currentColor; border-bottom: 0; }

.app { min-height: 100vh; display: flex; flex-direction: column; background: #f6fafc; }

.titlebar { display: flex; align-items: center; height: 19px; background: #d9dfde; }
.brand { display: flex; align-items: center; gap: 3px; width: 55px; padding-left: 6px; font: 11px/12px "Open Sans", sans-serif; color: #3f484b; }
.brand sup { font-size: 5px; line-height: 5px; vertical-align: 5px; }
.quick { display: flex; align-items: center; gap: 5px; }
.quick button { gap: 4px; }
.quick .redo { color: #a4abad; }
.quick .more { height: 18px; padding-left: 6px; border-left: 1px solid #b4bcbd; }
.titlebar h1 { flex: 1; padding-left: 75px; white-space: nowrap; font-family: "Noto Sans", sans-serif; }
.winctl { display: flex; gap: 8px; padding-right: 3px; }

.menubar { display: flex; align-items: stretch; height: 18px; background: #3b4548; color: #f4f7f7; font-weight: 600; }
.menubar a { display: flex; align-items: center; justify-content: center; padding-top: 1px; white-space: nowrap; }
.menubar .file { width: 44px; background: linear-gradient(90deg, #66c53b, #44a32f); }
.menubar .current { width: 57px; background: #f6fafc; color: #4c9237; }
.t1 { width: 54px; }
.t2 { width: 140px; }
.t3 { width: 78px; }
.t4 { width: 78px; }
.t5 { width: 40px; }
.t6 { width: 115px; }
.t7 { width: 73px; }
.help { display: flex; align-items: center; gap: 7px; margin-left: auto; padding: 0 4px 2px 0; }
.help button { gap: 3px; font-size: 9px; font-weight: 700; }

.ribbon { display: flex; height: 70px; padding-top: 1px; border-bottom: 2px solid #c5d0d4; background: #f7fafc; }
.group { display: flex; flex-direction: column; border-right: 1px solid #c6ced1; }
.tools { display: flex; height: 51px; justify-content: space-between; padding: 0 4px; }
.tools.mid { justify-content: center; }
.label { flex: 1; gap: 3px; padding-top: 2px; }
.stack { display: flex; flex-direction: column; }
.stack button { flex: 1; justify-content: flex-start; gap: 2px; }
.stack .caret { margin-left: 4px; }
.stack .far { margin-left: 5px; }
.off { color: #a5abad; }
.big { flex-direction: column; justify-content: flex-start; padding-top: 3px; text-align: center; line-height: 9px; }
.big svg { width: 20px; height: 20px; margin-bottom: 7px; }
.big .caret { margin-top: 1px; }
.matrix { display: grid; grid-template-columns: repeat(3, 16px); grid-auto-rows: 17px; }
.g1 { width: 90px; }
.g2 { width: 73px; }
.g3 { width: 33px; }
.g4 { width: 98px; }
.g5 { width: 130px; }
.g6 { width: 123px; }
.g6 .tools { padding: 0 3px; }
.g7 { width: 84px; }
.g8 { width: 69px; }
.g9 { width: 71px; }

.work { flex: 1; display: grid; grid-template-columns: 1fr 4fr; }
.side { border-right: 1px solid #ccd4d8; min-width: 0; }
.tabs { display: flex; height: 19px; background: #d6dcdd; }
.tabs button { flex: 1; gap: 2px; border-left: 1px solid #e5e9e9; overflow: hidden; }
.tabs .on { flex: 0 0 76px; background: #f6fafc; border: 0; }
.fade { color: #69757a; }
.treehead { display: flex; align-items: center; gap: 8px; height: 20px; padding: 0 6px 0 16px; }
.treehead h2 { flex: 1; font-weight: 700; white-space: nowrap; }
.treehead button { gap: 6px; }
.filter { display: flex; align-items: center; gap: 3px; padding: 0 7px; }
.field { flex: 1; display: flex; height: 18px; border: 1px solid #a9b2b5; background: #fff; padding-right: 1px; }
.field input { flex: 1; min-width: 0; outline: 0; }
.field .s { width: 9px; opacity: .7; }
.filter > button { width: 8px; }
.filter .plus { font: 700 14px/14px "Open Sans", sans-serif; color: #7e888b; margin-left: 4px; }
.nodes { padding: 4px 6px; }
.nodes li { display: flex; align-items: center; gap: 3px; height: 13px; white-space: nowrap; }
.nodes .child { padding-left: 3px; }
.arrow { width: 6px; height: 6px; border: 3px solid transparent; border-left: 4px solid #6a7578; border-right: 0; }
.gap { width: 6px; }
.insert { height: 2px; margin: 0 3px 0 4px; background: #36b51d; }

.canvas { position: relative; background: #e6e9ed; display: grid; }
.model { width: 100%; height: 100%; }
.viewbar { position: absolute; top: 4px; left: 50%; transform: translateX(-50%); width: 64%; height: 21px; display: flex; align-items: center; justify-content: space-between; padding: 0 4px; background: #f7fafb; border: 1px solid #afb7ba; }
.viewbar button { width: 12px; height: 16px; position: relative; }
.dot::after { content: ""; position: absolute; right: -2px; bottom: 1px; width: 1px; height: 1px; background: #444c4f; }

.status { display: flex; align-items: center; height: 26px; padding-top: 3px; border-top: 1px solid #b9c6ca; background: #f6fafc; }
.panes { display: flex; align-items: center; gap: 2px; padding: 0 4px 0 3px; margin-right: 5px; border-right: 1px solid #c5cdd0; }
.panes button { width: 16px; height: 16px; }
.panes .pressed { background: #dde1e2; border: 1px solid #b6bec0; }
.panes .s { width: 11px; height: 11px; }
.status p { flex: 1; align-self: stretch; display: flex; align-items: center; gap: 3px; margin: 1px 18px 2px 0; border-right: 2px solid #cbd1d3; font: 6px/8px "Noto Sans", sans-serif; }
.status p b { color: #145e87; font-size: 9px; }
.search { display: flex; height: 18px; margin-right: 52px; padding: 1px 1px 1px 3px; border-left: 3px double #bac2c5; border-right: 1px solid #bac2c5; }
.search button { width: 12px; border: 1px solid #ced4d6; background: #fff; }
.search button:first-child { width: 19px; border-right: 0; }
.pick { display: flex; position: relative; width: 100px; height: 18px; margin-right: 10px; }
.pick select { flex: 1; appearance: none; padding-left: 5px; border: 1px solid #aab3b6; border-radius: 0; background: #f7f9f9; }
.drop { position: absolute; inset: 0 0 0 auto; width: 12px; border-left: 1px solid #aab3b6; display: grid; place-items: center; pointer-events: none; }
```
